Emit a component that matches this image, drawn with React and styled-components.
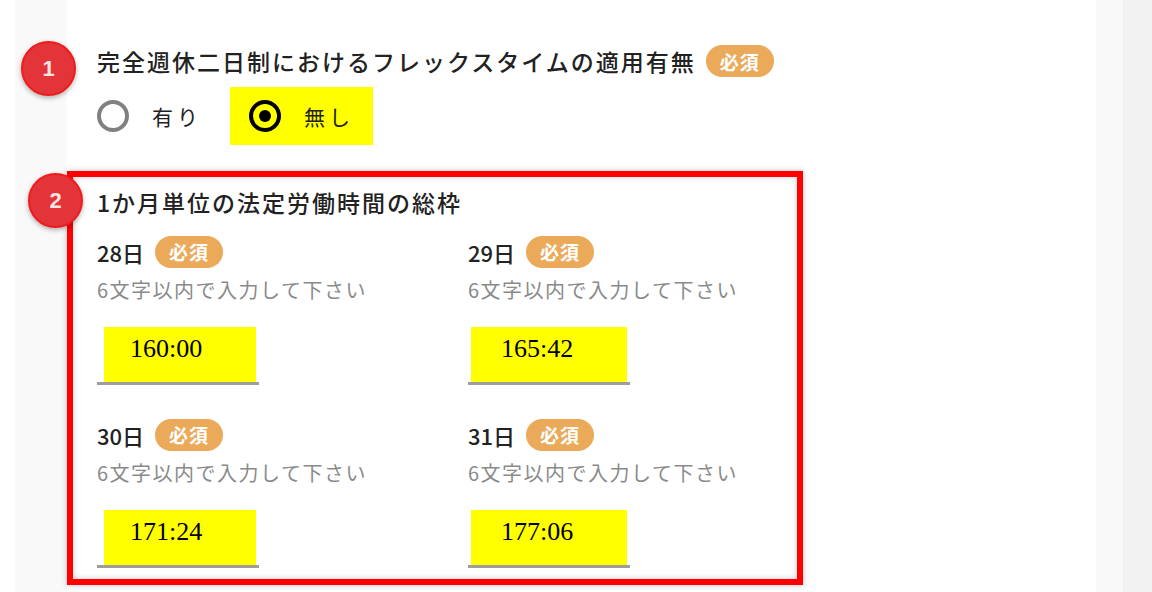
import styled, { createGlobalStyle } from 'styled-components';

const GlobalStyle = createGlobalStyle`
  html, body {
    margin: 0;
    padding: 0;
    background: #fff;
  }
  body {
    font-family: 'Noto Sans CJK JP', 'Noto Sans', sans-serif;
    color: #222;
  }
`;

const Page = styled.div`
  display: flex;
  width: 1152px;
  height: 592px;
  overflow: hidden;
  padding-left: 15px;
  box-sizing: border-box;
  background: #fff;
`;

const Sheet = styled.main`
  flex: 1;
  background: #fff;
  border-left: 52px solid #f9f9f9;
  border-right: 27px solid #f9f9f9;
  padding-top: 44px;
`;

const Track = styled.div`
  width: 29px;
  background: #f2f2f2;
`;

const Question = styled.section`
  position: relative;
  padding-left: 30px;
`;

const Step = styled.div`
  position: absolute;
  left: ${p => p.$left}px;
  top: ${p => p.$top}px;
  width: 51px;
  height: 51px;
  border-radius: 50%;
  background: #e3343a;
  border: 2px solid #f01c1c;
  box-shadow: 0 2px 5px rgba(0, 0, 0, 0.3);
  color: #fbe4e4;
  font-family: 'Liberation Sans', Arial, sans-serif;
  font-weight: 700;
  font-size: 22px;
  display: flex;
  align-items: center;
  justify-content: center;
  z-index: 2;
`;

const TitleRow = styled.div`
  display: flex;
  align-items: center;
  gap: 10px;
  height: 34px;
`;

const Title = styled.h2`
  margin: 0;
  font-size: 23px;
  font-weight: 500;
  letter-spacing: 2px;
  line-height: 33px;
  color: #222;
`;

const Required = styled.span`
  display: inline-flex;
  align-items: center;
  justify-content: center;
  width: 68px;
  height: 32px;
  border-radius: 16px;
  background: #eba95a;
  color: #fff;
  font-size: 19px;
  font-weight: 700;
  letter-spacing: 1px;
`;

const RadioRow = styled.div`
  display: flex;
  align-items: center;
  margin-top: 9px;
  height: 58px;
`;

const Option = styled.label`
  display: flex;
  align-items: center;
  gap: 23px;
  height: 58px;
  padding: 0 ${p => (p.$mark ? 19 : 0)}px 0 ${p => (p.$mark ? 19 : 0)}px;
  margin-right: ${p => (p.$mark ? 0 : 28)}px;
  background: ${p => (p.$mark ? '#ffff00' : 'transparent')};
  font-size: 21px;
  letter-spacing: 4px;
  color: #222;
`;

const RadioDot = styled.span`
  width: 32px;
  height: 32px;
  box-sizing: border-box;
  border-radius: 50%;
  border: 4px solid ${p => (p.$on ? '#000' : '#808080')};
  display: flex;
  align-items: center;
  justify-content: center;
  &::after {
    content: '';
    width: 12px;
    height: 12px;
    border-radius: 50%;
    background: ${p => (p.$on ? '#000' : 'transparent')};
  }
`;

const Frame = styled.section`
  position: relative;
  margin-top: 26px;
  width: 736px;
  height: 414px;
  box-sizing: border-box;
  border: 6px solid #ff0000;
  box-shadow: 0 0 6px rgba(0, 0, 0, 0.25), inset 0 0 6px rgba(0, 0, 0, 0.2);
  padding: 9px 0 0 24px;
`;

const Grid = styled.div`
  display: grid;
  grid-template-columns: 371px 300px;
  row-gap: 33px;
  margin-top: 16px;
`;

const Field = styled.div`
  display: flex;
  flex-direction: column;
`;

const FieldLabel = styled.div`
  display: flex;
  align-items: center;
  gap: 11px;
  height: 33px;
  font-size: 22px;
  font-weight: 500;
  color: #222;
`;

const Hint = styled.div`
  margin-top: 7px;
  font-size: 20px;
  line-height: 30px;
  letter-spacing: 1.5px;
  color: #8a8a8a;
`;

const InputWrap = styled.div`
  margin-top: 22px;
  width: 162px;
  border-bottom: 3px solid #9e9e9e;
  padding: 0 3px 0 ${p => p.$inset}px;
  box-sizing: border-box;
`;

const Input = styled.div`
  height: 55px;
  background: #ffff00;
  padding: 7px 0 0 ${p => p.$pad}px;
  box-sizing: border-box;
  font-family: 'Liberation Serif', 'Times New Roman', serif;
  font-size: 26px;
  line-height: 30px;
  color: #000;
`;

const fields = [
  { day: '28日', value: '160:00', inset: 7, pad: 26 },
  { day: '29日', value: '165:42', inset: 3, pad: 30 },
  { day: '30日', value: '171:24', inset: 7, pad: 26 },
  { day: '31日', value: '177:06', inset: 3, pad: 30 },
];

const App = () => (
  <>
    <GlobalStyle />
    <Page>
      <Sheet>
        <Question>
          <Step $left={-46} $top={-3}>1</Step>
          <TitleRow>
            <Title>完全週休二日制におけるフレックスタイムの適用有無</Title>
            <Required>必須</Required>
          </TitleRow>
          <RadioRow>
            <Option>
              <RadioDot />
              有り
            </Option>
            <Option $mark>
              <RadioDot $on />
              無し
            </Option>
          </RadioRow>
        </Question>

        <Frame>
          <Step $left={-45} $top={-4}>2</Step>
          <Title>1か月単位の法定労働時間の総枠</Title>
          <Grid>
            {fields.map(f => (
              <Field key={f.day}>
                <FieldLabel>
                  {f.day}
                  <Required>必須</Required>
                </FieldLabel>
                <Hint>6文字以内で入力して下さい</Hint>
                <InputWrap $inset={f.inset}>
                  <Input $pad={f.pad}>{f.value}</Input>
                </InputWrap>
              </Field>
            ))}
          </Grid>
        </Frame>
      </Sheet>
      <Track />
    </Page>
  </>
);

export default App;
